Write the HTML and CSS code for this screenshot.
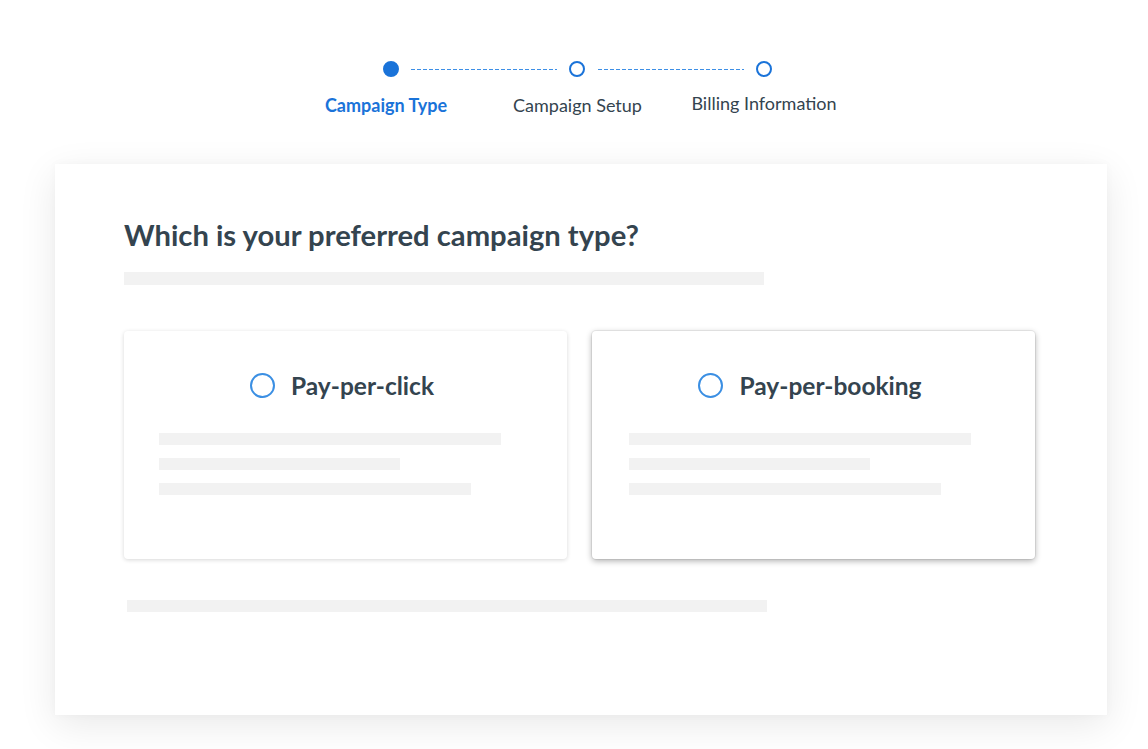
FILE: index.html
```html
<!DOCTYPE html>
<html>
<head>
<meta charset="utf-8">
<link rel="stylesheet" href="styles.css">
</head>
<body>
<div class="page">
  <div class="stepper">
    <div class="track">
      <span class="dot dot-active"></span>
      <span class="line"></span>
      <span class="dot"></span>
      <span class="line line-2"></span>
      <span class="dot"></span>
    </div>
    <div class="labels">
      <span class="label label-active">Campaign Type</span>
      <span class="label">Campaign Setup</span>
      <span class="label label-last">Billing Information</span>
    </div>
  </div>

  <div class="panel">
    <h1 class="title">Which is your preferred campaign type?</h1>
    <div class="bar bar-intro"></div>
    <div class="cards">
      <div class="card">
        <div class="option"><span class="radio"></span><span class="option-label">Pay-per-click</span></div>
        <div class="lines">
          <div class="bar l1"></div>
          <div class="bar l2"></div>
          <div class="bar l3"></div>
        </div>
      </div>
      <div class="card card-hover">
        <div class="option"><span class="radio"></span><span class="option-label">Pay-per-booking</span></div>
        <div class="lines">
          <div class="bar l1"></div>
          <div class="bar l2"></div>
          <div class="bar l3"></div>
        </div>
      </div>
    </div>
    <div class="bar bar-foot"></div>
  </div>
</div>
</body>
</html>
```

FILE: styles.css
```css
html, body {
  margin: 0;
  padding: 0;
  background: #ffffff;
}
body {
  font-family: Lato, "Noto Sans", "Liberation Sans", sans-serif;
  color: #34444f;
}
.page {
  width: 1148px;
  height: 749px;
  overflow: hidden;
  padding-top: 61px;
  box-sizing: border-box;
}
.stepper {
  display: flex;
  flex-direction: column;
  padding-left: 298px;
}
.track {
  display: flex;
  align-items: center;
  padding-left: 85px;
  height: 16px;
}
.dot {
  width: 16px;
  height: 16px;
  box-sizing: border-box;
  border-radius: 50%;
  border: 2px solid #1a73d9;
  flex: none;
}
.dot-active {
  background: #1a73d9;
}
.line {
  width: 146px;
  height: 1px;
  margin: 0 12px;
  background: repeating-linear-gradient(90deg, #3d8fe6 0 4px, transparent 4px 6px);
  flex: none;
}
.line-2 {
  margin-left: 13px;
}
.labels {
  display: grid;
  grid-template-columns: 186px 187px 186px;
  margin-top: 17px;
}
.label {
  text-align: center;
  font-size: 18px;
  line-height: 22px;
  color: #34444f;
  white-space: nowrap;
}
.label-active {
  color: #1a73d9;
  font-weight: 700;
  padding-right: 10px;
}
.label-last {
  margin-top: -2px;
}
.panel {
  margin: 48px 0 0 55px;
  width: 1052px;
  height: 551px;
  box-sizing: border-box;
  padding: 51px 72px 0 69px;
  background: #fff;
  box-shadow: 0 10px 36px rgba(0, 0, 0, 0.09), 0 0 8px rgba(0,0,0,0.03);
}
.title {
  margin: 0;
  font-size: 29.2px;
  line-height: 40px;
  font-weight: 700;
  color: #34444f;
}
.bar {
  background: #f2f2f2;
}
.bar-intro {
  width: 640px;
  height: 13px;
  margin-top: 17px;
}
.cards {
  display: flex;
  gap: 25px;
  margin-top: 46px;
}
.card {
  width: 443px;
  height: 228px;
  box-sizing: border-box;
  background: #fff;
  border-radius: 4px;
  box-shadow: 0 1px 4px rgba(0, 0, 0, 0.16);
  padding: 40px 0 0 35px;
}
.card .option {
  padding-right: 42px;
}
.card-hover {
  padding-left: 37px;
  box-shadow: 0 0 0 1px rgba(0,0,0,0.06), 0 2px 6px rgba(0, 0, 0, 0.32);
}
.card-hover .option {
  padding-right: 44px;
}
.option {
  display: flex;
  align-items: center;
  justify-content: center;
  height: 28px;
}
.radio {
  width: 25px;
  height: 25px;
  box-sizing: border-box;
  border-radius: 50%;
  border: 2.5px solid #3b8fe3;
  margin-right: 16px;
  flex: none;
}
.option-label {
  font-size: 24.5px;
  font-weight: 700;
  color: #34444f;
}
.lines {
  display: flex;
  flex-direction: column;
  gap: 13px;
  margin-top: 34px;
}
.lines .bar {
  height: 12px;
}
.l1 { width: 342px; }
.l2 { width: 241px; }
.l3 { width: 312px; }
.bar-foot {
  width: 640px;
  height: 12px;
  margin: 41px 0 0 3px;
}
```
